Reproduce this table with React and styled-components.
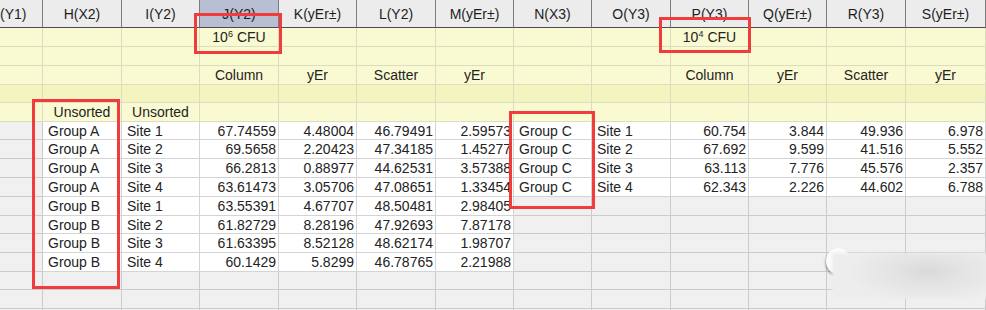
import styled, { createGlobalStyle } from "styled-components"

const GlobalStyle = createGlobalStyle`
  body {
    margin: 0;
    background: #ffffff;
    font-family: "Liberation Sans", Arial, sans-serif;
  }
`

const Sheet = styled.div`
  position: relative;
  width: 986px;
  height: 310px;
  overflow: hidden;
  background: #f0f0f0;
`

const Grid = styled.div`
  display: grid;
  grid-template-columns: ${props => props.cols};
  grid-template-rows: 28px 19px 19px 19px 18px 19px ${props => props.dataRows};
`

const Cell = styled.div`
  box-sizing: border-box;
  display: flex;
  align-items: center;
  border-right: 1px solid #d0d0d0;
  border-bottom: 1px solid #d0d0d0;
  font-size: 14px;
  color: #232323;
  white-space: nowrap;
  overflow: hidden;
`

const HeaderCell = styled(Cell)`
  justify-content: ${props => props.clipped ? "flex-start" : "center"};
  background: ${props => props.selected ? "#b9bfd3" : "#ececec"};
  border-right: 1px solid #7c7c7c;
  border-bottom: 1px solid #4c4c4c;
  color: #1e1e1e;
  padding-top: 1px;
`

const LabelCell = styled(Cell)`
  justify-content: center;
  background: ${props => props.dark ? "#f4f4c1" : "#fafad2"};
  border-right: 1px solid #dcdcc0;
  border-bottom: 1px solid #dcdcc0;
`

const DataCell = styled(Cell)`
  justify-content: ${props => props.text ? "flex-start" : "flex-end"};
  padding: ${props => props.text ? "0 0 0 5px" : "0 2px 0 0"};
  background: ${props => props.empty ? "#f0f0f0" : "#ffffff"};
  border-color: ${props => props.empty ? "#cbcbcb" : "#d4d4d4"};
`

const Sup = styled.span`
  font-size: 9px;
  align-self: flex-start;
  margin-top: 1px;
  margin-right: 4px;
`

const UnitText = styled.span`
  display: flex;
  align-items: center;
  height: 100%;
`

const RedBox = styled.div`
  position: absolute;
  box-sizing: border-box;
  border: 3px solid #f03c3c;
  pointer-events: none;
`

const Smudge = styled.div`
  position: absolute;
  left: 832px;
  top: 253px;
  width: 160px;
  height: 46px;
  background: radial-gradient(ellipse 50% 70% at 60% 40%, #d9d9d9 0%, #e3e3e3 40%, #ededed 100%);
  filter: blur(1.5px);
`

const SmudgeDot = styled.div`
  position: absolute;
  left: 826px;
  top: 248px;
  width: 24px;
  height: 26px;
  border-radius: 50%;
  background: #fbfbfb;
  box-shadow: -1px 2px 2px rgba(110, 110, 110, 0.5);
  filter: blur(0.6px);
`

const groups = ["Group A", "Group A", "Group A", "Group A", "Group B", "Group B", "Group B", "Group B"]
const sites = ["Site 1", "Site 2", "Site 3", "Site 4", "Site 1", "Site 2", "Site 3", "Site 4"]

const columns = [
  { name: "(Y1)", width: 43, clipped: true, data: [] },
  { name: "H(X2)", width: 79, text: true, labels: ["", "", "", "", "Unsorted"], data: groups },
  { name: "I(Y2)", width: 78, text: true, labels: ["", "", "", "", "Unsorted"], data: sites },
  { name: "J(Y2)", width: 79, selected: true, labels: [["10", "6"], "", "Column", "", ""],
    data: ["67.74559", "69.5658", "66.2813", "63.61473", "63.55391", "61.82729", "61.63395", "60.1429"] },
  { name: "K(yEr±)", width: 78, labels: ["", "", "yEr", "", ""],
    data: ["4.48004", "2.20423", "0.88977", "3.05706", "4.67707", "8.28196", "8.52128", "5.8299"] },
  { name: "L(Y2)", width: 79, labels: ["", "", "Scatter", "", ""],
    data: ["46.79491", "47.34185", "44.62531", "47.08651", "48.50481", "47.92693", "48.62174", "46.78765"] },
  { name: "M(yEr±)", width: 78, labels: ["", "", "yEr", "", ""],
    data: ["2.59573", "1.45277", "3.57388", "1.33454", "2.98405", "7.87178", "1.98707", "2.21988"] },
  { name: "N(X3)", width: 78, text: true, data: ["Group C", "Group C", "Group C", "Group C"] },
  { name: "O(Y3)", width: 79, text: true, data: ["Site 1", "Site 2", "Site 3", "Site 4"] },
  { name: "P(Y3)", width: 78, labels: [["10", "4"], "", "Column", "", ""],
    data: ["60.754", "67.692", "63.113", "62.343"] },
  { name: "Q(yEr±)", width: 78, labels: ["", "", "yEr", "", ""],
    data: ["3.844", "9.599", "7.776", "2.226"] },
  { name: "R(Y3)", width: 79, labels: ["", "", "Scatter", "", ""],
    data: ["49.936", "41.516", "45.576", "44.602"] },
  { name: "S(yEr±)", width: 80, labels: ["", "", "yEr", "", ""],
    data: ["6.978", "5.552", "2.357", "6.788"] },
]

const dataRowHeights = [18, 19, 19, 19, 19, 18, 19, 19, 18, 19, 19]

function Label({ value }) {
  if (Array.isArray(value)) {
    return <UnitText>{value[0]}<Sup>{value[1]}</Sup>CFU</UnitText>
  }
  return value
}

export default function App() {
  const cols = columns.map(c => c.width + "px").join(" ")
  const dataRows = dataRowHeights.map(h => h + "px").join(" ")

  return (
    <>
      <GlobalStyle />
      <Sheet>
        <Grid cols={cols} dataRows={dataRows}>
          {columns.map(c => (
            <HeaderCell key={c.name} selected={c.selected} clipped={c.clipped}>{c.name}</HeaderCell>
          ))}
          {[0, 1, 2, 3, 4].map(r =>
            columns.map(c => (
              <LabelCell key={c.name + "-l" + r} dark={r === 3}>
                <Label value={c.labels ? c.labels[r] : ""} />
              </LabelCell>
            ))
          )}
          {dataRowHeights.map((_, r) =>
            columns.map(c => {
              const value = c.data[r]
              return (
                <DataCell key={c.name + "-d" + r} text={c.text} empty={value === undefined}>
                  {value}
                </DataCell>
              )
            })
          )}
        </Grid>
        <RedBox style={{ left: 194, top: 13, width: 88, height: 41 }} />
        <RedBox style={{ left: 659, top: 17, width: 92, height: 36 }} />
        <RedBox style={{ left: 32, top: 99, width: 88, height: 190 }} />
        <RedBox style={{ left: 509, top: 111, width: 86, height: 98 }} />
        <SmudgeDot />
        <Smudge />
      </Sheet>
    </>
  )
}
